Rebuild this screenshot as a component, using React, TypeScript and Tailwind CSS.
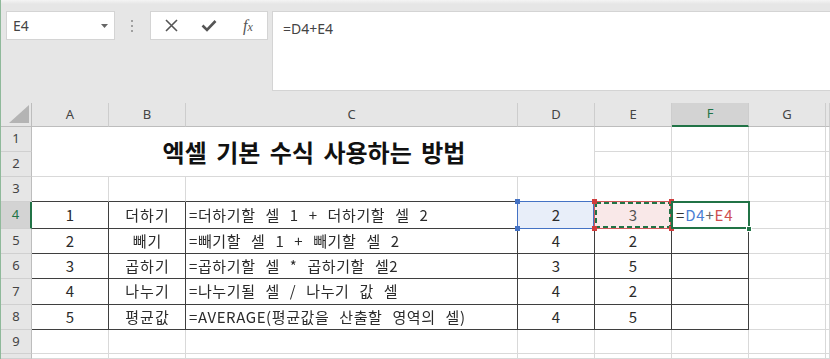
import React from "react";

const KR = "font-['Noto_Sans_CJK_KR','Noto_Sans',sans-serif]";
const UI = "font-['Noto_Sans','Liberation_Sans',sans-serif]";

const colLetters = ["A", "B", "C", "D", "E", "F", "G", ""];

const data = [
  ["1", "더하기", "=더하기할 셀 1 + 더하기할 셀 2", "2", "3"],
  ["2", "빼기", "=빼기할 셀 1 + 빼기할 셀 2", "4", "2"],
  ["3", "곱하기", "=곱하기할 셀 * 곱하기할 셀2", "3", "5"],
  ["4", "나누기", "=나누기될 셀 / 나누기 값 셀", "4", "2"],
  ["5", "평균값", "=AVERAGE(평균값을 산출할 영역의 셀)", "4", "5"],
];

const LIGHT = "border-r border-b border-[#d9d9d9]";

function Corner({ color, pos }: { color: string; pos: string }) {
  return <span className={`absolute w-[5px] h-[5px] ${color} ${pos}`} />;
}

function RowHeader({ n, active }: { n: number; active?: boolean }) {
  return (
    <div
      className={`${UI} flex items-center justify-center text-[13px] border-b border-[#d0d0d0] ${
        active
          ? "bg-[#d3d3d3] text-[#217346] border-r-2 border-r-[#217346]"
          : "bg-[#e6e6e6] text-[#444] border-r border-r-[#bdbdbd]"
      }`}
    >
      {n > 0 ? n : ""}
    </div>
  );
}

export default function App() {
  const cells: React.ReactNode[] = [];

  cells.push(
    <div key="corner" className="bg-[#e6e6e6] border-r border-b border-[#bdbdbd] flex items-end justify-end pr-[2px] pb-[3px]">
      <svg width="20" height="18" viewBox="0 0 20 18">
        <path d="M20 0 L20 18 L0 18 Z" fill="#b4b4b4" />
      </svg>
    </div>
  );
  colLetters.forEach((c, i) => {
    const active = c === "F";
    cells.push(
      <div
        key={"h" + i}
        className={`${UI} flex items-center justify-center text-[13px] border-r border-r-[#cdcdcd] ${
          active
            ? "bg-[#d3d3d3] text-[#217346] border-b-2 border-b-[#217346]"
            : "bg-[#e6e6e6] text-[#444] border-b border-b-[#bdbdbd]"
        }`}
      >
        {c}
      </div>
    );
  });

  cells.push(<RowHeader key="r1" n={1} />);
  cells.push(
    <div
      key="title"
      className={`col-span-4 row-span-2 bg-white ${LIGHT} flex items-center justify-center pl-[2px] ${KR} text-[24px] font-bold text-[#111] [word-spacing:4px]`}
    >
      엑셀 기본 수식 사용하는 방법
    </div>
  );
  for (let i = 0; i < 4; i++) cells.push(<div key={"r1c" + i} className={`bg-white ${LIGHT}`} />);
  cells.push(<RowHeader key="r2" n={2} />);
  for (let i = 0; i < 4; i++) cells.push(<div key={"r2c" + i} className={`bg-white ${LIGHT}`} />);

  cells.push(<RowHeader key="r3" n={3} />);
  for (let i = 0; i < 7; i++) {
    const dark = i < 6;
    cells.push(
      <div
        key={"r3c" + i}
        className={`bg-white border-r border-b border-r-[#d9d9d9] ${dark ? "border-b-[#3f3f3f]" : "border-b-[#d9d9d9]"}`}
      />
    );
  }
  cells.push(<div key="r3h" className={`bg-white ${LIGHT}`} />);

  data.forEach((r, ri) => {
    const rowNum = ri + 4;
    cells.push(<RowHeader key={"rh" + rowNum} n={rowNum} active={rowNum === 4} />);
    const base = `bg-white border-r border-b border-[#3f3f3f] ${KR} text-[15px] text-[#2b2b2b] flex items-center`;
    cells.push(
      <div key={"a" + rowNum} className={`${base} justify-center`}>
        {r[0]}
      </div>
    );
    cells.push(
      <div key={"b" + rowNum} className={`${base} justify-center tracking-[1px] pl-[1px]`}>
        <span className="grayscale">{r[1]}</span>
      </div>
    );
    cells.push(
      <div key={"c" + rowNum} className={`${base} pl-[3px] whitespace-nowrap tracking-[0.6px] [word-spacing:6px]`}>
        <span className="grayscale">{r[2]}</span>
      </div>
    );
    if (rowNum === 4) {
      cells.push(
        <div key="d4" className={`${base} justify-center relative !bg-[#e8eef9]`}>
          <div className="absolute -left-px -top-px right-0 -bottom-px border border-[#4472c4]" />
          <Corner color="bg-[#4472c4]" pos="-left-[3px] -top-[3px]" />
          <Corner color="bg-[#4472c4]" pos="-left-[3px] -bottom-[3px]" />
          <span className="relative">{r[3]}</span>
        </div>
      );
      cells.push(
        <div key="e4" className={`${base} justify-center relative !bg-[#f9e8e8]`}>
          <div className="absolute -left-px -top-px right-0 -bottom-px border border-[#d05a5a]" />
          <svg className="absolute -left-px -top-px" width="78" height="28" viewBox="0 0 78 28">
            <rect x="2" y="2" width="74" height="24" fill="none" stroke="#217346" strokeWidth="2" strokeDasharray="5 3" />
          </svg>
          <Corner color="bg-[#d03c3c]" pos="-left-[3px] -top-[3px]" />
          <Corner color="bg-[#d03c3c]" pos="-left-[3px] -bottom-[3px]" />
          <Corner color="bg-[#d03c3c]" pos="-right-[3px] -top-[3px]" />
          <Corner color="bg-[#d03c3c]" pos="-right-[3px] -bottom-[3px]" />
          <span className="relative text-[#555]">{r[4]}</span>
        </div>
      );
      cells.push(
        <div key="f4" className={`${base} relative pl-[4px] text-[15.5px] tracking-[0.8px]`}>
          <div className="absolute -left-px -top-px -right-[2px] -bottom-px border-2 border-[#217346]" />
          <span className="absolute -right-[4px] -bottom-[4px] w-[6px] h-[6px] bg-[#217346] border border-white" />
          <span className="relative">
            <span className="text-[#333]">=</span>
            <span className="text-[#4a7fd4]">D4</span>
            <span className="text-[#666]">+</span>
            <span className="text-[#d05050]">E4</span>
          </span>
        </div>
      );
    } else {
      cells.push(
        <div key={"d" + rowNum} className={`${base} justify-center`}>
          {r[3]}
        </div>
      );
      cells.push(
        <div key={"e" + rowNum} className={`${base} justify-center`}>
          {r[4]}
        </div>
      );
      cells.push(<div key={"f" + rowNum} className={base} />);
    }
    cells.push(<div key={"g" + rowNum} className={`bg-white ${LIGHT}`} />);
    cells.push(<div key={"x" + rowNum} className={`bg-white ${LIGHT}`} />);
  });

  [9, 10].forEach((n) => {
    cells.push(<RowHeader key={"rh" + n} n={n === 10 ? 0 : n} />);
    for (let i = 0; i < 8; i++) cells.push(<div key={"r" + n + "c" + i} className={`bg-white ${LIGHT}`} />);
  });

  return (
    <div className={`w-[830px] h-[359px] overflow-hidden bg-[#e6e6e6] border-l border-[#8fb99a] flex flex-col antialiased ${UI}`}>
      <div className="h-[103px] shrink-0 flex flex-col bg-[#e6e6e6]">
        <div className="h-[4px] bg-gradient-to-b from-[#f4f4f4] to-[#e6e6e6]" />
        <div className="flex items-start pt-[7px] pl-[5px]">
          <div className="w-[109px] h-[29px] bg-white border border-[#d4d4d4] flex items-center justify-between pl-[6px] pr-[6px]">
            <span className="text-[14px] text-[#444] leading-none">E4</span>
            <svg width="7" height="4" viewBox="0 0 7 4">
              <path d="M0 0 L7 0 L3.5 4 Z" fill="#666" />
            </svg>
          </div>
          <div className="w-[35px] h-[29px] flex flex-col items-center justify-center gap-[3px] pr-[1px]">
            <span className="w-[2px] h-[2px] bg-[#a0a0a0]" />
            <span className="w-[2px] h-[2px] bg-[#a0a0a0]" />
            <span className="w-[2px] h-[2px] bg-[#a0a0a0]" />
          </div>
          <div className="w-[118px] h-[29px] bg-white border border-[#d4d4d4] flex items-center">
            <div className="w-[38px] flex justify-center pl-[2px]">
              <svg width="13" height="13" viewBox="0 0 13 13">
                <path d="M1 1 L12 12 M12 1 L1 12" stroke="#555" strokeWidth="1.6" />
              </svg>
            </div>
            <div className="w-[38px] flex justify-center pl-[2px]">
              <svg width="16" height="13" viewBox="0 0 16 13">
                <path d="M1.5 6.5 L6 11 L14.5 2" stroke="#555" strokeWidth="2.6" fill="none" />
              </svg>
            </div>
            <div className="w-[38px] flex justify-center pl-[4px]">
              <span className="font-['Liberation_Serif',serif] italic text-[16px] text-[#555] leading-none">
                f<span className="text-[12px]">x</span>
              </span>
            </div>
          </div>
          <div className="ml-[4px] flex-1 h-[80px] bg-white border border-r-0 border-[#d4d4d4] pl-[10px] pt-[4px]">
            <span className="text-[14px] text-[#444]">=D4+E4</span>
          </div>
        </div>
      </div>
      <div className="flex-1 grid grid-cols-[31px_77px_77px_332px_77px_77px_77px_77px_1fr] grid-rows-[24px_25px_25px_25px_27px_25px_25px_26px_25px_24px_1fr]">
        {cells}
      </div>
    </div>
  );
}
